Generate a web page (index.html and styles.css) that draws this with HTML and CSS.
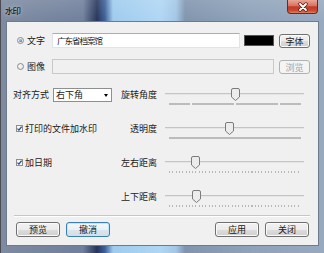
FILE: index.html
```html
<!DOCTYPE html>
<html lang="zh-CN">
<head>
	<title>水印</title>
	<meta charset="utf-8" />
	<link rel="stylesheet" href="styles.css">
</head>
<body>
<div class="window">
	<div class="titlebar">
		<span class="title">水印</span>
		<div class="close-btn">
			<svg width="12" height="10" viewBox="0 0 12 10">
				<path d="M3 2 L9 8 M9 2 L3 8" stroke="#5a2219" stroke-width="3.4" stroke-linecap="round" />
				<path d="M3 2 L9 8 M9 2 L3 8" stroke="#fff" stroke-width="1.8" stroke-linecap="round" />
			</svg>
		</div>
	</div>
	<div class="frame-body">
		<div class="client">
			<!-- watermark source -->
			<div class="source-row">
				<span class="radio checked"></span>
				<span class="source-label">文字</span>
				<div class="textbox">广东省档案馆</div>
				<div class="swatch"></div>
				<button class="btn btn-small">字体</button>
			</div>
			<div class="source-row second">
				<span class="radio"></span>
				<span class="source-label">图像</span>
				<div class="textbox disabled wide"></div>
				<button class="btn btn-small" disabled>浏览</button>
			</div>

			<!-- settings -->
			<div class="settings">
				<div class="setting">
					<div class="setting-left">
						<span class="caption">对齐方式</span>
						<div class="combo">右下角<span class="combo-arrow"></span></div>
					</div>
					<span class="setting-label">旋转角度</span>
					<div class="slider">
						<div class="track"></div>
						<div class="ticks ticks-fine"></div>
						<svg class="thumb" style="left:66px" width="9" height="13" viewBox="0 0 9 13"><path d="M0.5 2 Q0.5 0.5 2 0.5 H7 Q8.5 0.5 8.5 2 V9 L4.5 12.5 L0.5 9 Z" fill="#ececec" stroke="#7b7b7b" /></svg>
					</div>
				</div>
				<div class="setting">
					<div class="setting-left">
						<span class="checkbox"><svg width="5" height="5" viewBox="0 0 5 5"><path d="M0.4 2.6 L1.9 4.1 L4.6 0.6" fill="none" stroke="#2a4d8f" stroke-width="1.3" /></svg></span>
						<span class="check-label">打印的文件加水印</span>
					</div>
					<span class="setting-label">透明度</span>
					<div class="slider">
						<div class="track"></div>
						<div class="ticks ticks-solid"></div>
						<svg class="thumb" style="left:60px" width="9" height="13" viewBox="0 0 9 13"><path d="M0.5 2 Q0.5 0.5 2 0.5 H7 Q8.5 0.5 8.5 2 V9 L4.5 12.5 L0.5 9 Z" fill="#ececec" stroke="#7b7b7b" /></svg>
					</div>
				</div>
				<div class="setting">
					<div class="setting-left">
						<span class="checkbox"><svg width="5" height="5" viewBox="0 0 5 5"><path d="M0.4 2.6 L1.9 4.1 L4.6 0.6" fill="none" stroke="#2a4d8f" stroke-width="1.3" /></svg></span>
						<span class="check-label">加日期</span>
					</div>
					<span class="setting-label">左右距离</span>
					<div class="slider">
						<div class="track"></div>
						<div class="ticks ticks-dotted"></div>
						<svg class="thumb" style="left:26px" width="9" height="13" viewBox="0 0 9 13"><path d="M0.5 2 Q0.5 0.5 2 0.5 H7 Q8.5 0.5 8.5 2 V9 L4.5 12.5 L0.5 9 Z" fill="#ececec" stroke="#7b7b7b" /></svg>
					</div>
				</div>
				<div class="setting">
					<div class="setting-left"></div>
					<span class="setting-label">上下距离</span>
					<div class="slider">
						<div class="track"></div>
						<div class="ticks ticks-dotted"></div>
						<svg class="thumb" style="left:27px" width="9" height="13" viewBox="0 0 9 13"><path d="M0.5 2 Q0.5 0.5 2 0.5 H7 Q8.5 0.5 8.5 2 V9 L4.5 12.5 L0.5 9 Z" fill="#ececec" stroke="#7b7b7b" /></svg>
					</div>
				</div>
			</div>

			<!-- bottom buttons -->
			<div class="footer">
				<div class="separator"></div>
				<div class="actions">
					<button class="btn">预览</button>
					<button class="btn btn-default">撤消</button>
					<span class="spacer"></span>
					<button class="btn">应用</button>
					<button class="btn">关闭</button>
				</div>
			</div>
		</div>
	</div>
</div>
</body>
</html>
```

FILE: styles.css
```css
body {
	margin: 0;
	padding: 0;
	font: 9px/13px "Noto Sans CJK SC", "Noto Sans", sans-serif;
	color: #1a1a1a;
}
.window {
	width: 324px;
	height: 253px;
	display: flex;
	flex-direction: column;
	box-sizing: border-box;
	border-left: 1px solid #4c4a55;
	background:
		linear-gradient(rgba(255,255,255,0.12), rgba(255,255,255,0) 22px),
		linear-gradient(90deg, #7d8aa0 0, #6f7f9c 82px, #26345a 96px, #3d619a 104px, #9ecbee 112px, #afd6f4 160px, #a3c6e6 175px, #8094ad 184px, #8ea2ba 250px, #97a9bf 100%);
}
.titlebar {
	height: 21px;
	display: flex;
	align-items: center;
	padding-left: 4px;
	position: relative;
}
.title {
	font-size: 8.5px;
	letter-spacing: -1px;
	color: #000;
	text-shadow: 0 0 5px rgba(255,255,255,0.7);
}
.close-btn {
	position: absolute;
	top: 0;
	right: 6px;
	width: 31px;
	height: 14px;
	box-sizing: border-box;
	border: 1px solid #6b2a20;
	border-top: none;
	border-radius: 0 0 4px 4px;
	background: linear-gradient(#e9a596 0%, #d8725e 45%, #c33a24 52%, #c9482f 80%, #dc8165 100%);
	display: flex;
	align-items: center;
	justify-content: center;
}
.frame-body {
	flex: 1;
	display: flex;
	padding: 0 5px 7px 5px;
}
.client {
	flex: 1;
	display: flex;
	flex-direction: column;
	border: 1px solid #6e7b8c;
	background: #f0f0f0;
	padding-top: 11px;
}

/* source rows */
.source-row {
	display: flex;
	align-items: center;
	height: 15px;
	padding-left: 10px;
}
.source-row.second {
	margin-top: 11px;
}
.radio {
	width: 7px;
	height: 7px;
	box-sizing: border-box;
	border-radius: 50%;
	border: 1px solid #8b8d90;
	background: radial-gradient(circle at 40% 40%, #fafafa, #d9d9d9);
	position: relative;
}
.radio.checked::after {
	content: "";
	position: absolute;
	left: 1px;
	top: 1px;
	width: 3px;
	height: 3px;
	border-radius: 50%;
	background: radial-gradient(circle at 35% 35%, #9fd0f7, #1c58a6);
}
.source-label {
	width: 25px;
	margin-left: 3px;
}
.textbox {
	width: 188px;
	height: 15px;
	box-sizing: border-box;
	border: 1px solid #e2e3ea;
	border-top-color: #abadb3;
	background: #fff;
	padding-left: 4px;
	font-size: 8.5px;
	letter-spacing: -1px;
	line-height: 13px;
}
.textbox.wide {
	width: 222px;
}
.textbox.disabled {
	background: #f0f0f0;
	border-color: #c9c9c9;
}
.swatch {
	width: 30px;
	height: 11px;
	margin-left: 4px;
	background: #000;
	border: 1px solid #555;
	box-sizing: border-box;
}
.btn {
	width: 44px;
	height: 15px;
	padding: 0;
	box-sizing: border-box;
	font: 9px/13px "Noto Sans CJK SC", "Noto Sans", sans-serif;
	color: #1a1a1a;
	border: 1px solid #707070;
	border-radius: 3px;
	background: linear-gradient(#f2f2f2 0%, #ebebeb 50%, #dddddd 51%, #cfcfcf 100%);
	box-shadow: inset 0 0 0 1px #fafafa;
}
.btn-small {
	width: 31px;
	height: 14px;
	margin-left: 5px;
}
.btn:disabled {
	color: #a3a3a3;
	border-color: #adb2b5;
	background: #f4f4f4;
	box-shadow: none;
}
.btn-default {
	border-color: #3c7fb1;
	box-shadow: inset 0 0 0 1px #bfe6f9;
	background: linear-gradient(#f4f8fb 0%, #eaf1f6 50%, #dde6ec 51%, #d3dde4 100%);
}

/* settings */
.settings {
	display: flex;
	flex-direction: column;
	gap: 21px;
	margin-top: 14px;
	padding-left: 6px;
}
.setting {
	display: flex;
	align-items: center;
	height: 13px;
}
.setting-left {
	width: 107px;
	display: flex;
	align-items: center;
}
.caption {
	width: 40px;
}
.combo {
	width: 59px;
	height: 14px;
	box-sizing: border-box;
	border: 1px solid #8e8f8f;
	background: #fff;
	padding-left: 2px;
	line-height: 12px;
	position: relative;
}
.combo-arrow {
	position: absolute;
	right: 3px;
	top: 5px;
	border-left: 2.5px solid transparent;
	border-right: 2.5px solid transparent;
	border-top: 3px solid #000;
}
.checkbox {
	width: 7px;
	height: 7px;
	box-sizing: border-box;
	margin-left: 3px;
	border: 1px solid #8b8d90;
	background: linear-gradient(#f4f4f4, #fff);
	display: flex;
	align-items: center;
	justify-content: center;
}
.check-label {
	margin-left: 2px;
}
.setting-label {
	width: 37px;
	text-align: right;
}
.slider {
	width: 139px;
	height: 13px;
	margin-left: 8px;
	position: relative;
}
.track {
	position: absolute;
	left: 0;
	right: 0;
	top: 5px;
	height: 1px;
	background: #c4c4c4;
	border-bottom: 1px solid #e6e6e6;
}
.ticks {
	position: absolute;
	left: 4px;
	right: 3px;
	top: 15px;
	height: 2px;
}
.ticks-solid {
	background: #bcbcbc;
}
.ticks-fine {
	background: repeating-linear-gradient(90deg, #bcbcbc 0 42px, transparent 42px 44px);
	background-position: -21px 0;
}
.ticks-dotted {
	background: repeating-linear-gradient(90deg, #b8b8b8 0 1px, transparent 1px 3.3px);
}
.thumb {
	position: absolute;
	top: 0;
}

/* footer */
.footer {
	margin-top: auto;
	padding: 0 8px 8px 7px;
}
.separator {
	height: 1px;
	background: #c6c6c6;
	border-bottom: 1px solid #fff;
}
.actions {
	display: flex;
	gap: 6px;
	margin-top: 5px;
	padding: 0 1px 0 2px;
}
.spacer {
	flex: 1;
}
```
